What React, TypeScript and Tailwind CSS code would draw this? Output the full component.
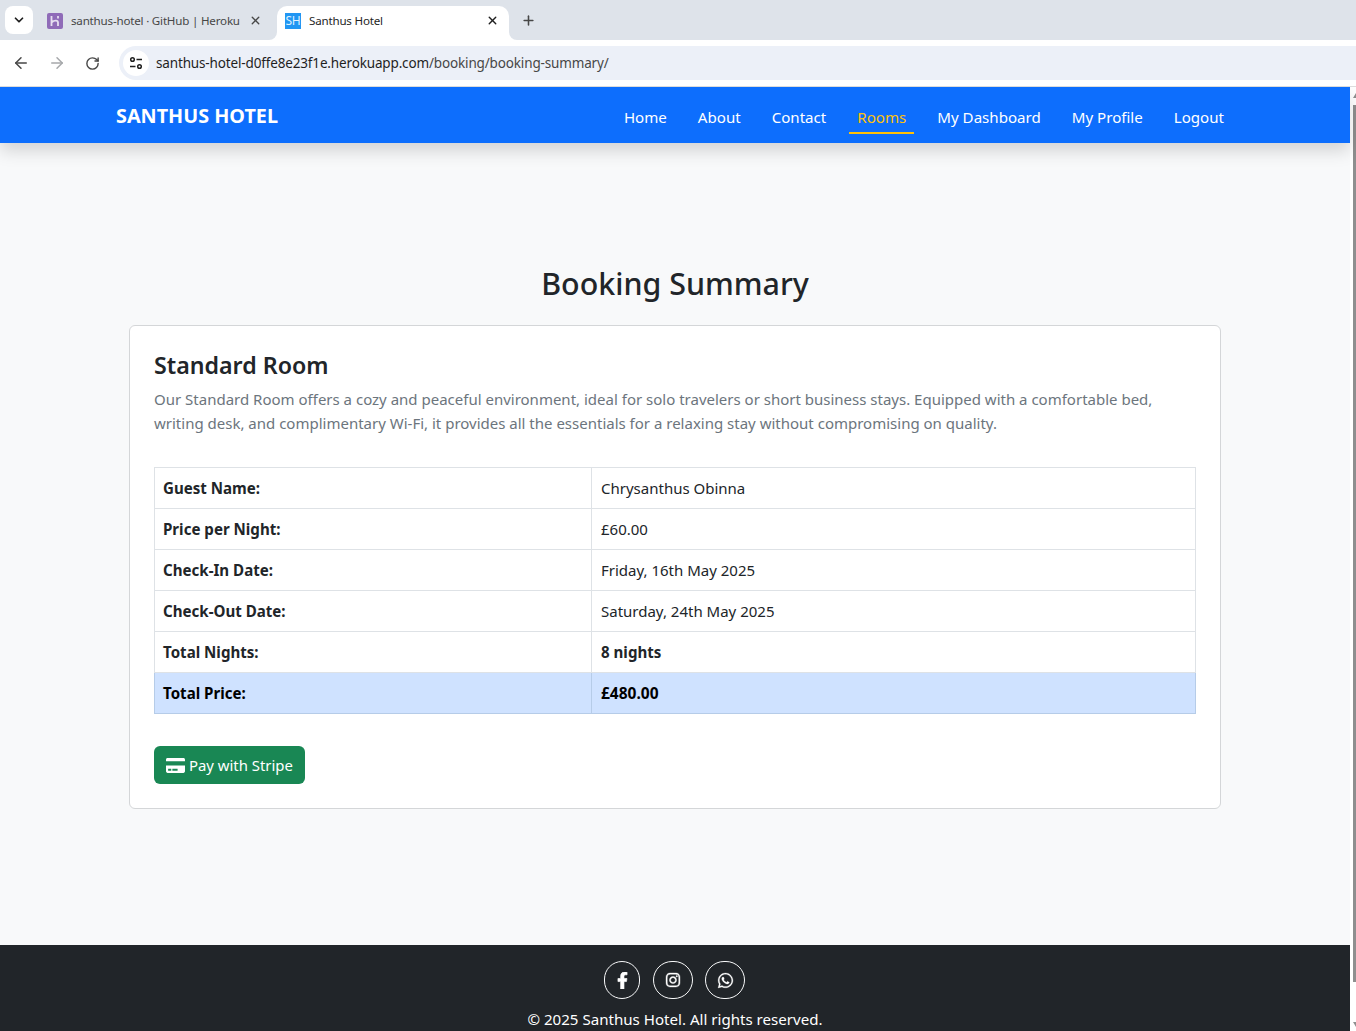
import { ArrowLeft, ArrowRight, ChevronDown, Plus, RotateCw, X } from "lucide-react";
import { FaCreditCard, FaFacebookF, FaInstagram, FaWhatsapp } from "react-icons/fa";

const navLinks = ["Home", "About", "Contact", "Rooms", "My Dashboard", "My Profile", "Logout"];

const rows = [
  { label: "Guest Name:", value: "Chrysanthus Obinna" },
  { label: "Price per Night:", value: "£60.00" },
  { label: "Check-In Date:", value: "Friday, 16th May 2025" },
  { label: "Check-Out Date:", value: "Saturday, 24th May 2025" },
  { label: "Total Nights:", value: "8 nights", bold: true },
];

const socials = [
  { icon: <FaFacebookF size={17} stroke="currentColor" strokeWidth={20} />, width: "w-[36px]" },
  { icon: <FaInstagram size={16} stroke="currentColor" strokeWidth={12} />, width: "w-[40px]" },
  { icon: <FaWhatsapp size={17} stroke="currentColor" strokeWidth={8} />, width: "w-[40px]" },
];

function HerokuFavicon() {
  return (
    <svg width="16" height="16" viewBox="0 0 16 16" className="shrink-0">
      <rect width="16" height="16" rx="2" fill="#8f6bb8" />
      <path d="M4.5 3v10M4.5 9.5l2 -1.5M4.5 9c3-2 6.5-2 6.5 0.5V13M11 3v2.5" stroke="#e6def0" strokeWidth="1.8" fill="none" />
    </svg>
  );
}

function BrowserChrome() {
  return (
    <div className="font-['Noto_Sans',sans-serif] text-[11.6px] tracking-[-0.2px]">
      <div className="flex h-10 items-end bg-[#dee3ea] pl-[5px]">
        <div className="mb-[6px] flex h-7 w-7 items-center justify-center rounded-lg bg-white">
          <ChevronDown size={14} strokeWidth={3} className="text-[#1f1f1f]" />
        </div>
        <div className="flex h-[34px] w-[244px] items-center pb-[5px] pl-[14px] pr-[15px] text-[#474747]">
          <HerokuFavicon />
          <span className="ml-2 flex-1 truncate">santhus-hotel · GitHub | Heroku</span>
          <X size={13} strokeWidth={2.5} className="text-[#474747]" />
        </div>
        <div className="relative flex h-[34px] w-[232px] items-center rounded-t-[10px] bg-white pb-[5px] pl-2 pr-[10px] text-[#1f1f1f]">
          <div className="absolute bottom-0 -left-2 h-2 w-2 bg-white">
            <div className="h-2 w-2 rounded-br-[8px] bg-[#dee3ea]" />
          </div>
          <div className="absolute bottom-0 -right-2 h-2 w-2 bg-white">
            <div className="h-2 w-2 rounded-bl-[8px] bg-[#dee3ea]" />
          </div>
          <div className="flex h-4 w-4 items-center justify-center bg-[#2196f3] text-[12px] text-[#dff1ff]">SH</div>
          <span className="ml-2 flex-1">Santhus Hotel</span>
          <X size={13} strokeWidth={2.5} className="text-[#1f1f1f]" />
        </div>
        <div className="mb-[6px] ml-[12px] flex h-7 w-4 items-center">
          <Plus size={15} strokeWidth={2.5} className="text-[#474747]" />
        </div>
      </div>
      <div className="flex h-[47px] items-center border-b border-[#dcdcdc] bg-white pl-3">
        <ArrowLeft size={18} strokeWidth={2} className="text-[#474747]" />
        <ArrowRight size={18} strokeWidth={2} className="ml-[18px] text-[#a6a8ab]" />
        <RotateCw size={15} strokeWidth={2.25} className="ml-[19px] text-[#474747]" />
        <div className="ml-[19px] flex h-[34px] flex-1 items-center rounded-l-full bg-[#ecf0f8] pl-[4px]">
          <div className="flex h-[26px] w-[26px] items-center justify-center rounded-full bg-white">
            <svg width="16" height="16" viewBox="0 0 16 16" fill="none" stroke="#1f1f1f" strokeWidth="1.5">
              <circle cx="4.5" cy="4.5" r="1.8" />
              <path d="M8.5 4.5H14" />
              <circle cx="11.5" cy="11.5" r="1.8" />
              <path d="M2 11.5H7.5" />
            </svg>
          </div>
          <span className="ml-[7px] text-[13.5px] tracking-[-0.15px] text-[#1f1f1f]">
            santhus-hotel-d0ffe8e23f1e.herokuapp.com<span className="text-[#474747]">/booking/booking-summary/</span>
          </span>
        </div>
      </div>
    </div>
  );
}

function Navbar() {
  return (
    <nav className="relative z-10 flex h-14 items-center justify-between bg-[#0d6efd] pl-[116px] pr-[118px] shadow-[0_8px_16px_rgba(0,0,0,0.15)]">
      <a className="pt-[2px] text-[19.8px] font-bold text-white">SANTHUS HOTEL</a>
      <ul className="flex gap-[15px]">
        {navLinks.map((link) => (
          <li key={link}>
            <a
              className={
                link === "Rooms"
                  ? "block border-b-2 border-[#ffc107] px-2 pb-[3px] pt-2 text-[#ffc107]"
                  : "block border-b-2 border-transparent px-2 pb-[3px] pt-2 text-white"
              }
            >
              {link}
            </a>
          </li>
        ))}
      </ul>
    </nav>
  );
}

function SummaryTable() {
  return (
    <table className="mt-[32px] w-full border-collapse text-[#212529]">
      <tbody>
        {rows.map((row) => (
          <tr key={row.label} className="h-[41px]">
            <td className="w-[437px] border border-[#dee2e6] px-2 font-bold">{row.label}</td>
            <td
              className={
                row.bold
                  ? "border border-[#dee2e6] pl-[9px] font-bold"
                  : "border border-[#dee2e6] pl-[9px] text-[15px]"
              }
            >
              {row.value}
            </td>
          </tr>
        ))}
        <tr className="h-[41px] bg-[#cfe2ff] text-black">
          <td className="border border-[#b6cce8] px-2 font-bold">Total Price:</td>
          <td className="border border-[#b6cce8] pl-[9px] text-[15.5px] font-bold">£480.00</td>
        </tr>
      </tbody>
    </table>
  );
}

function Footer() {
  return (
    <footer className="flex flex-1 flex-col items-center bg-[#212529] pt-4 text-white">
      <div className="mr-px flex gap-[12.5px]">
        {socials.map((social, i) => (
          <a
            key={i}
            className={`flex h-[38px] items-center justify-center rounded-full border border-[#f8f9fa] ${social.width}`}
          >
            {social.icon}
          </a>
        ))}
      </div>
      <p className="mt-[8px]">© 2025 Santhus Hotel. All rights reserved.</p>
    </footer>
  );
}

export default function App() {
  return (
    <div className="flex h-[1031px] flex-col overflow-hidden bg-white">
      <BrowserChrome />
      <div className="flex flex-1 overflow-hidden">
        <div className="flex flex-1 flex-col bg-[#f8f9fa] font-['Noto_Sans',sans-serif] text-[15.1px] leading-6">
          <Navbar />
          <main className="flex h-[802px] flex-col px-[129px] pt-[120px]">
            <h1 className="mb-[20px] text-center text-[30.4px] font-medium leading-[42px] text-[#212529]">Booking Summary</h1>
            <div className="h-[484px] rounded-[6px] border border-[#d4d6d8] bg-white px-6 pt-[24px]">
              <h2 className="text-[23.2px] font-semibold leading-[30px] text-[#212529]">Standard Room</h2>
              <p className="mt-[7px] text-[15px] text-[#6c757d]">
                Our Standard Room offers a cozy and peaceful environment, ideal for solo travelers or short business stays. Equipped with a comfortable bed, writing desk, and complimentary Wi-Fi, it provides all the essentials for a relaxing stay without compromising on quality.
              </p>
              <SummaryTable />
              <a className="mt-[32px] inline-flex h-[38px] items-center gap-[4px] rounded-[6px] bg-[#198754] px-3 text-[14.9px] text-white">
                <FaCreditCard size={19} />
                Pay with Stripe
              </a>
            </div>
          </main>
          <Footer />
        </div>
        <div className="flex w-[6px] flex-col items-end bg-white">
          <div className="mr-[-3px] mt-[6px] h-0 w-0 border-x-[3px] border-b-[5px] border-x-transparent border-b-[#8f8f8f]" />
          <div className="mt-[7px] h-[877px] w-[3px] bg-[#8f8f8f]" />
          <div className="mr-[-3px] mt-[40px] h-0 w-0 border-x-[3px] border-t-[5px] border-x-transparent border-t-[#8f8f8f]" />
        </div>
      </div>
    </div>
  );
}
